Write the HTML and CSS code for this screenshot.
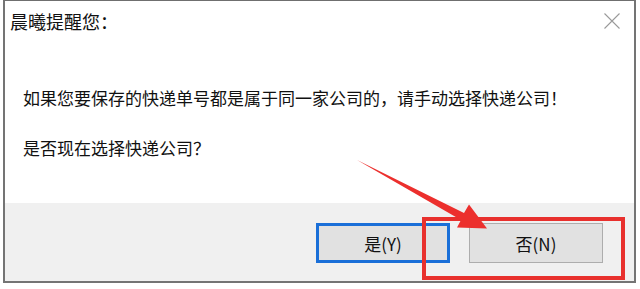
FILE: index.html
```html
<!DOCTYPE html>
<html lang="zh-CN">
<head>
<meta charset="utf-8">
<title>晨曦提醒您</title>
<link rel="stylesheet" href="styles.css">
</head>
<body>
<div class="page">
  <div class="window">
    <div class="content">
      <div class="title-row">
        <div class="title">晨曦提醒您：</div>
        <svg class="close" width="16" height="16" viewBox="0 0 16 16" aria-label="关闭">
          <path d="M0.5 0.5 L15.5 15.5 M15.5 0.5 L0.5 15.5" stroke="#9a9a9a" stroke-width="1.1" fill="none"/>
        </svg>
      </div>
      <div class="message">
        <p class="line">如果您要保存的快递单号都是属于同一家公司的，请手动选择快递公司！</p>
        <p class="line">是否现在选择快递公司？</p>
      </div>
    </div>
    <div class="footer">
      <button class="btn btn-default">是(Y)</button>
      <button class="btn">否(N)</button>
    </div>
  </div>
  <div class="mark-box"></div>
  <svg class="mark-arrow" width="640" height="289" viewBox="0 0 640 289">
    <polygon points="357,160 464,213 469,204.5 487,228.5 457,227.5 461,220" fill="#ec2f2d"/>
  </svg>
</div>
</body>
</html>
```

FILE: styles.css
```css
html, body {
  margin: 0;
  padding: 0;
  background: #ffffff;
}

.page {
  position: relative;
  width: 640px;
  height: 289px;
  overflow: hidden;
  font-family: "Noto Sans CJK SC", "Noto Sans", sans-serif;
  color: #111111;
}

.window {
  box-sizing: border-box;
  margin-left: 3px;
  width: 633px;
  height: 283px;
  border-top: 1px solid #6f6f6f;
  border-left: 2px solid #747474;
  border-right: 2px solid #747474;
  border-bottom: 2px solid #747474;
  display: flex;
  flex-direction: column;
}

.content {
  flex: 1;
  background: #ffffff;
  display: flex;
  flex-direction: column;
}

.title-row {
  display: flex;
  justify-content: space-between;
  align-items: flex-start;
  padding: 8px 14px 0 5px;
}

.title {
  font-size: 18px;
  line-height: 24px;
}

.close {
  display: block;
  margin-top: 4px;
}

.message {
  display: flex;
  flex-direction: column;
  gap: 26px;
  padding: 53px 0 0 18px;
}

.line {
  margin: 0;
  font-size: 17px;
  line-height: 24px;
  white-space: nowrap;
}

.footer {
  height: 78px;
  flex: none;
  background: #f0f0f0;
  display: flex;
  justify-content: flex-end;
  align-items: flex-start;
  gap: 19px;
  padding: 20px 31px 0 0;
  box-sizing: border-box;
}

.btn {
  box-sizing: border-box;
  width: 134px;
  height: 40px;
  margin: 0;
  padding: 0;
  background: #e1e1e1;
  border: 1px solid #adadad;
  font-family: "Noto Sans CJK SC", "Noto Sans", sans-serif;
  font-size: 17px;
  color: #111111;
  line-height: 1;
}

.btn-default {
  border: 3px solid #1a6fd8;
}

.mark-box {
  position: absolute;
  left: 422px;
  top: 217px;
  width: 203px;
  height: 63px;
  box-sizing: border-box;
  border: 4px solid #e8302d;
}

.mark-arrow {
  position: absolute;
  left: 0;
  top: 0;
}
```
